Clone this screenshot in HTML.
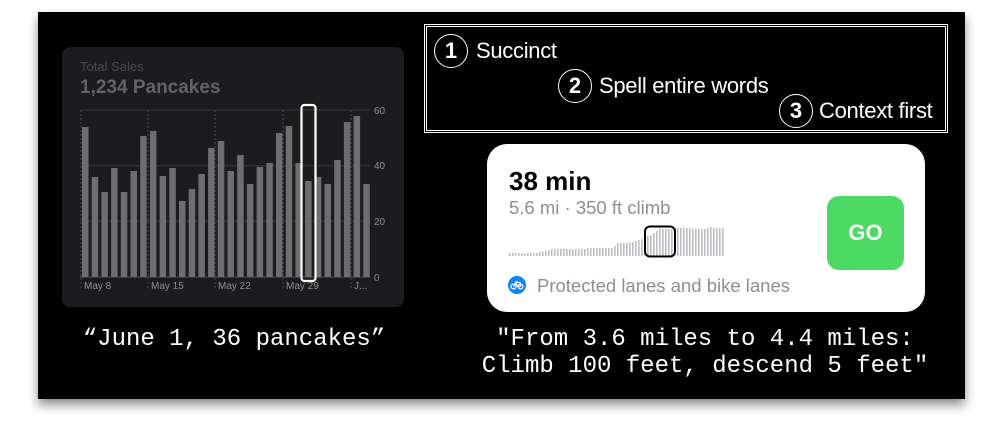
<!DOCTYPE html>
<html><head><style>
html,body{margin:0;padding:0;width:1000px;height:423px;background:#fff;overflow:hidden;font-family:"Liberation Sans",sans-serif}
#panel{position:absolute;left:38px;top:12px;width:927px;height:387px;background:#000;box-shadow:0 6px 10px rgba(0,0,0,.45)}
.abs{position:absolute}
.card{left:62px;top:47px;width:342px;height:260px;background:#1c1c1e;border-radius:8px}
.mono{font-family:"Liberation Mono",monospace;color:#fff;font-size:24px;text-align:center;white-space:nowrap}
.circ{position:absolute;width:34px;height:34px;border:1.5px solid #fff;border-radius:50%;box-sizing:border-box;color:#fff;font-weight:bold;font-size:22px;text-align:center;line-height:31px}
.lbl{position:absolute;color:#fff;font-size:22px;white-space:nowrap;letter-spacing:-0.3px}
</style></head><body>
<div id="panel"></div>
<div class="abs card"></div>
<div class="abs" style="left:80px;top:59px;color:#4a4a4c;font-size:13px">Total Sales</div>
<div class="abs" style="left:80px;top:77px;color:#636366;font-size:19px;font-weight:bold">1,234 Pancakes</div>
<svg class="abs" style="left:0;top:0" width="420" height="310">
<g stroke="#3a3a3c" stroke-width="1"><line x1="80" y1="110" x2="370" y2="110"/><line x1="80" y1="165.7" x2="370" y2="165.7"/><line x1="80" y1="221.3" x2="370" y2="221.3"/><line x1="80" y1="277" x2="370" y2="277" stroke="#555"/></g>
<g stroke="#48484a" stroke-dasharray="2,2"><line x1="81" y1="110" x2="81" y2="290"/><line x1="148" y1="110" x2="148" y2="290"/><line x1="215" y1="110" x2="215" y2="290"/><line x1="283" y1="110" x2="283" y2="290"/><line x1="351" y1="110" x2="351" y2="290"/></g>
<g fill="#6e6e70">
<rect x="82" y="127" width="6.5" height="150"/><rect x="91.7" y="177" width="6.5" height="100"/><rect x="101.4" y="192" width="6.5" height="85"/><rect x="111.1" y="168" width="6.5" height="109"/><rect x="120.8" y="192" width="6.5" height="85"/><rect x="130.5" y="171" width="6.5" height="106"/><rect x="140.2" y="136" width="6.5" height="141"/><rect x="149.9" y="131" width="6.5" height="146"/><rect x="159.6" y="176" width="6.5" height="101"/><rect x="169.3" y="168" width="6.5" height="109"/><rect x="179" y="201" width="6.5" height="76"/><rect x="188.7" y="189" width="6.5" height="88"/><rect x="198.4" y="174" width="6.5" height="103"/><rect x="208.1" y="148" width="6.5" height="129"/><rect x="217.8" y="141" width="6.5" height="136"/><rect x="227.5" y="171" width="6.5" height="106"/><rect x="237.2" y="155" width="6.5" height="122"/><rect x="246.9" y="184" width="6.5" height="93"/><rect x="256.6" y="167" width="6.5" height="110"/><rect x="266.3" y="163" width="6.5" height="114"/><rect x="276" y="133" width="6.5" height="144"/><rect x="285.7" y="126" width="6.5" height="151"/><rect x="295.4" y="163" width="6.5" height="114"/><rect x="305.1" y="181" width="6.5" height="96"/><rect x="314.8" y="177" width="6.5" height="100"/><rect x="324.5" y="184" width="6.5" height="93"/><rect x="334.2" y="160" width="6.5" height="117"/><rect x="343.9" y="122" width="6.5" height="155"/><rect x="353.6" y="116" width="6.5" height="161"/><rect x="363.3" y="184" width="6.5" height="93"/>
</g>
<rect x="301.5" y="105" width="14" height="176" rx="3" fill="none" stroke="#fff" stroke-width="2.2"/>
<g fill="#8e8e93" font-size="10" font-family="Liberation Sans"><text x="374" y="114">60</text><text x="374" y="169">40</text><text x="374" y="225">20</text><text x="374" y="281">0</text>
<text x="84" y="289">May 8</text><text x="151" y="289">May 15</text><text x="218" y="289">May 22</text><text x="286" y="289">May 29</text><text x="354" y="289">J...</text></g>
</svg>

<div class="abs" style="left:424px;top:24px;width:524px;height:109px;border:3px double #fff;box-sizing:border-box"></div>
<div class="circ" style="left:434px;top:34px">1</div><div class="lbl" style="left:476px;top:38px">Succinct</div>
<div class="circ" style="left:558px;top:69px">2</div><div class="lbl" style="left:599px;top:73px">Spell entire words</div>
<div class="circ" style="left:779px;top:94px">3</div><div class="lbl" style="left:819px;top:98px">Context first</div>

<div class="abs" style="left:487px;top:144px;width:438px;height:168px;background:#fff;border-radius:20px"></div>
<div class="abs" style="left:509px;top:166px;font-size:26px;font-weight:bold;color:#000">38 min</div>
<div class="abs" style="left:509px;top:197px;font-size:18.5px;color:#8e8e93">5.6 mi · 350 ft climb</div>
<svg class="abs" style="left:500px;top:215px" width="240" height="50">
<g fill="#bdbdc2">
<rect x="9" y="38" width="1.6" height="3"/><rect x="12" y="38" width="1.6" height="3"/><rect x="15" y="38" width="1.6" height="3"/><rect x="18" y="38" width="1.6" height="3"/><rect x="21" y="38" width="1.6" height="3"/><rect x="24" y="38" width="1.6" height="3"/><rect x="27" y="38" width="1.6" height="3"/><rect x="30" y="38" width="1.6" height="3"/><rect x="33" y="38" width="1.6" height="3"/><rect x="36" y="38" width="1.6" height="3"/><rect x="39" y="37" width="1.6" height="4"/><rect x="42" y="37" width="1.6" height="4"/><rect x="45" y="36" width="1.6" height="5"/><rect x="48" y="35" width="1.6" height="6"/>
<rect x="51" y="34" width="1.6" height="7"/><rect x="54" y="34" width="1.6" height="7"/><rect x="57" y="34" width="1.6" height="7"/><rect x="60" y="34" width="1.6" height="7"/><rect x="63" y="34" width="1.6" height="7"/><rect x="66" y="34" width="1.6" height="7"/><rect x="69" y="34" width="1.6" height="7"/><rect x="72" y="34" width="1.6" height="7"/><rect x="75" y="34" width="1.6" height="7"/><rect x="78" y="34" width="1.6" height="7"/><rect x="81" y="34" width="1.6" height="7"/><rect x="84" y="34" width="1.6" height="7"/><rect x="87" y="33" width="1.6" height="8"/><rect x="90" y="33" width="1.6" height="8"/><rect x="93" y="33" width="1.6" height="8"/><rect x="96" y="33" width="1.6" height="8"/><rect x="99" y="33" width="1.6" height="8"/><rect x="102" y="33" width="1.6" height="8"/><rect x="105" y="33" width="1.6" height="8"/><rect x="108" y="33" width="1.6" height="8"/><rect x="111" y="33" width="1.6" height="8"/><rect x="114" y="31" width="1.6" height="10"/>
<rect x="117" y="28" width="1.6" height="13"/><rect x="120" y="28" width="1.6" height="13"/><rect x="123" y="28" width="1.6" height="13"/><rect x="126" y="28" width="1.6" height="13"/><rect x="129" y="27" width="1.6" height="14"/><rect x="132" y="27" width="1.6" height="14"/><rect x="135" y="26" width="1.6" height="15"/><rect x="138" y="25" width="1.6" height="16"/><rect x="141" y="24" width="1.6" height="17"/><rect x="144" y="23" width="1.6" height="18"/><rect x="147" y="21" width="1.6" height="20"/><rect x="150" y="20" width="1.6" height="21"/><rect x="153" y="18" width="1.6" height="23"/><rect x="156" y="16" width="1.6" height="25"/><rect x="159" y="14" width="1.6" height="27"/><rect x="162" y="14" width="1.6" height="27"/><rect x="165" y="14" width="1.6" height="27"/><rect x="168" y="14" width="1.6" height="27"/><rect x="171" y="14" width="1.6" height="27"/><rect x="174" y="13" width="1.6" height="28"/><rect x="177" y="13" width="1.6" height="28"/><rect x="180" y="13" width="1.6" height="28"/><rect x="183" y="13" width="1.6" height="28"/><rect x="186" y="13" width="1.6" height="28"/><rect x="189" y="13" width="1.6" height="28"/><rect x="192" y="14" width="1.6" height="27"/><rect x="195" y="14" width="1.6" height="27"/><rect x="198" y="14" width="1.6" height="27"/><rect x="201" y="14" width="1.6" height="27"/><rect x="204" y="14" width="1.6" height="27"/><rect x="207" y="13" width="1.6" height="28"/><rect x="210" y="12" width="1.6" height="29"/><rect x="213" y="13" width="1.6" height="28"/><rect x="216" y="13" width="1.6" height="28"/><rect x="219" y="13" width="1.6" height="28"/><rect x="222" y="13" width="1.6" height="28"/>
</g>
<rect x="145" y="11.5" width="30" height="30" rx="5" fill="none" stroke="#000" stroke-width="2"/>
</svg>
<div class="abs" style="left:827px;top:196px;width:77px;height:74px;background:#4cd964;border-radius:12px;color:#fff;font-weight:bold;font-size:22px;text-align:center;line-height:74px">GO</div>
<svg class="abs" style="left:508px;top:276px" width="18" height="18"><circle cx="9" cy="9" r="9" fill="#0a84ff"/><g fill="none" stroke="#fff" stroke-width="1.2"><circle cx="5.5" cy="10.5" r="2.4"/><circle cx="12.5" cy="10.5" r="2.4"/><path d="M5.5 10.5L8 6.5h4l.5 4M8 6.5l1.5 4h3M7.5 5.5h2"/></g></svg>
<div class="abs" style="left:537px;top:275px;font-size:18.5px;color:#8e8e93">Protected lanes and bike lanes</div>

<div class="abs mono" style="left:34px;top:326px;width:400px">“June 1, 36 pancakes”</div>
<div class="abs mono" style="left:455px;top:326px;width:500px">"From 3.6 miles to 4.4 miles:</div>
<div class="abs mono" style="left:455px;top:353px;width:500px">Climb 100 feet, descend 5 feet"</div>
</body></html>
